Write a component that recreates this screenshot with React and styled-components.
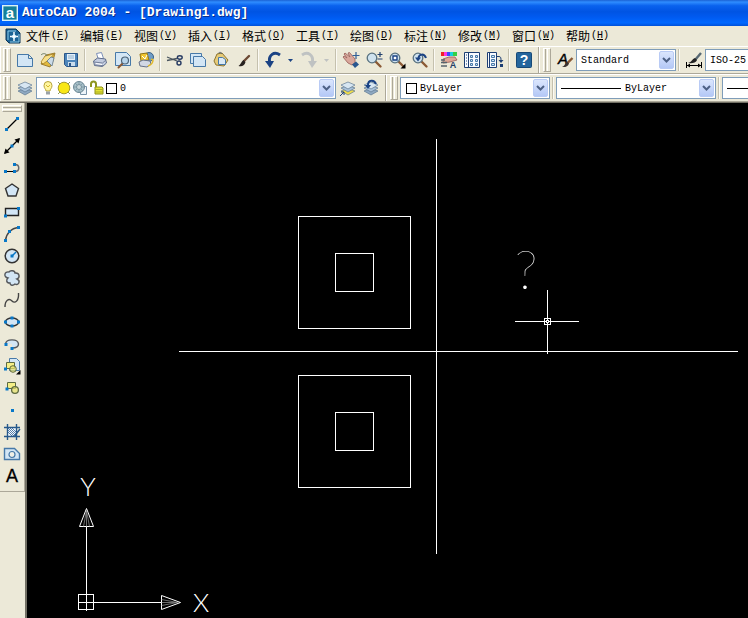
import styled, { createGlobalStyle } from "styled-components";

const GlobalStyle = createGlobalStyle`
    * {
        box-sizing: border-box;
    }
    body {
        margin: 0;
        background-color: #ece9d8;
        overflow: hidden;
    }
    button, select {
        font: inherit;
        color: inherit;
    }
`;

const mono = `"Liberation Mono", "Noto Sans CJK SC", monospace`;

const Window = styled.div`
    display: flex;
    flex-direction: column;
    min-height: 100vh;
    background-color: #ece9d8;
    color: #000;
    font-family: ${mono};
    font-size: 10px;
`;

const TitleBar = styled.header`
    display: flex;
    align-items: center;
    gap: 4px;
    height: 26px;
    padding-left: 2px;
    background: linear-gradient(#1b62d4 0%, #2f8dff 8%, #0a62ee 22%, #0054e3 45%, #005af0 65%, #0068ff 88%, #0050d8 100%);
`;

const Title = styled.h1`
    margin: 0;
    color: #fff;
    font-size: 13px;
    font-weight: bold;
    line-height: 16px;
    white-space: pre;
    text-shadow: 1px 1px 0 #0a2f8c;
`;

const MenuBar = styled.nav`
    display: flex;
    align-items: center;
    height: 20px;
    padding-left: 5px;
    overflow: hidden;
`;

const MenuItem = styled.button`
    display: flex;
    flex: none;
    align-items: center;
    gap: 1px;
    width: 54px;
    padding: 0 0 0 5px;
    border: 0;
    background: none;
    font-size: 10px;
    line-height: 18px;
    white-space: nowrap;
`;

const MenuName = styled.span`
    font-family: "Noto Sans CJK SC", sans-serif;
    font-size: 12px;
`;

const ToolRow = styled.div`
    display: flex;
    height: 28px;
    overflow: hidden;
    border-top: 1px solid #fff;
    border-bottom: 1px solid #aca899;
`;

const Toolbar = styled.div`
    display: flex;
    flex: none;
    align-items: center;
    padding: 0 3px 0 ${props => props.$lead || 3}px;
    border-right: 1px solid #aca899;
    border-left: 1px solid #fff;
`;

const Grip = styled.div`
    flex: none;
    width: ${props => (props.$flat ? "20px" : "8px")};
    height: ${props => (props.$flat ? "7px" : "24px")};
    margin-right: ${props => (props.$flat ? "0" : "2px")};
    border: 1px solid #aca899;
    border-color: #fff #aca899 #aca899 #fff;
    background: linear-gradient(
        ${props => (props.$flat ? "to bottom" : "to right")},
        #ece9d8 1px, #aca899 1px, #aca899 2px, #ece9d8 2px, #ece9d8 3px, #fff 3px, #fff 4px, #ece9d8 4px
    );
`;

const ToolButton = styled.button`
    display: flex;
    flex: none;
    align-items: center;
    justify-content: center;
    width: ${props => (props.$narrow ? 13 : 23)}px;
    height: 22px;
    padding: 0;
    border: 0;
    background: none;
`;

const Separator = styled.span`
    flex: none;
    width: 2px;
    height: 22px;
    margin: 0 2px;
    border-left: 1px solid #c5c1ae;
    border-right: 1px solid #fbfaf4;
`;

const ComboBox = styled.div`
    position: relative;
    display: flex;
    flex: none;
    align-items: center;
    width: ${props => props.$width}px;
    height: 22px;
    padding-left: 3px;
    border: 1px solid #7f9db9;
    background-color: #fff;
`;

const ComboSelect = styled.select`
    flex: 1;
    min-width: 0;
    height: 20px;
    padding: 0 18px 0 1px;
    border: 0;
    outline: 0;
    appearance: none;
    background: none;
`;

const ComboArrow = styled.span`
    position: absolute;
    top: 1px;
    right: 1px;
    display: flex;
    align-items: center;
    justify-content: center;
    width: 15px;
    height: 18px;
    border: 1px solid #b9cbf5;
    border-radius: 2px;
    background: linear-gradient(#dbe6fd, #b4c8f6);
    pointer-events: none;
`;

const Swatch = styled.span`
    flex: none;
    width: 11px;
    height: 11px;
    margin: 0 2px;
    border: 1px solid #000;
    background-color: #fff;
`;

const LineSample = styled.span`
    flex: none;
    width: 60px;
    margin: 0 3px 0 1px;
    border-top: 1px solid #000;
`;

const Workspace = styled.main`
    display: flex;
    flex: 1;
    border-top: 1px solid #716f64;
`;

const SideColumn = styled.aside`
    flex: none;
    width: 27px;
    border-right: 2px solid #716f64;
`;

const DrawToolbar = styled.div`
    display: flex;
    flex-direction: column;
    align-items: center;
    width: 25px;
    padding: 2px 0 4px;
    border-right: 1px solid #aca899;
    border-bottom: 1px solid #aca899;
`;

const DrawButtons = styled.div`
    display: flex;
    flex-direction: column;
    padding-top: 1px;
`;

const Canvas = styled.section`
    display: flex;
    flex: 1;
    min-width: 0;
    background-color: #000;
`;

const Drawing = styled.svg`
    flex: 1;
    min-width: 0;
    min-height: 515px;
    fill: none;
    stroke: #fff;
    stroke-width: 1;
`;

const DrawnText = styled.text`
    fill: #fff;
    stroke: none;
    font-family: Lato, Inter, sans-serif;
    font-weight: ${props => props.$weight};
    font-size: ${props => props.$size}px;
    text-anchor: middle;
`;

const sheet = "#d3e6f5";
const navy = "#1d3f74";
const steel = "#4779a8";
const node = "#0878c8";

const Dot = ({ x, y }) => <rect x={x - 1.5} y={y - 1.5} width="3" height="3" fill={node} />;

const Lens = ({ children }) => (
    <>
        <path d="M9.5 9.5l5 5" stroke="#8b5a35" strokeWidth="2.4" strokeLinecap="round" />
        <circle cx="6" cy="6" r="4.8" fill="#cfe2ee" stroke="#58717f" strokeWidth="1.3" />
        {children}
    </>
);

const Sheets = ({ base }) => (
    <>
        <path d="M1 11l7-2.5 7 2.5-7 4z" fill={base || "#8fa9c2"} stroke="#5e7891" strokeWidth=".7" />
        <path d="M1 8l7-2.5L15 8l-7 4z" fill="#a9c2da" stroke="#5e7891" strokeWidth=".7" />
        <path d="M1 5l7-3 7 3-7 4z" fill="#d7e6f2" stroke="#5e7891" strokeWidth=".7" />
    </>
);

const icons = {
    app: (
        <>
            <rect x=".7" y=".7" width="14.6" height="14.6" fill="#158099" stroke="#d9f1f6" strokeWidth="1.4" />
            <text x="8" y="12.5" fill="#fff" fontFamily="Liberation Sans, sans-serif" fontSize="15" fontWeight="bold" textAnchor="middle">a</text>
        </>
    ),
    document: (
        <>
            <path d="M1 1h10l4 4v10H4l-3-3z" fill="#1b6395" stroke="#0d3557" />
            <path d="M3 3v9M3 3h8M5 14h9V6" stroke="#8ccbe8" fill="none" />
            <path d="M9 4v9M5 8.500h8" stroke="#fff" strokeWidth="1.4" />
            <path d="M9 6l2 2.500-2 2.500-2-2.500z" stroke="#c6ecff" fill="#fff" />
        </>
    ),
    newFile: <path d="M.5 2.500h11l4 4v8H.5z M11.500 2.500v4h4" fill={sheet} stroke={steel} />,
    open: (
        <>
            <path d="M6 3l9-2-2 8-3 6-9-3z" fill="#e0b83e" stroke="#8a6a1c" strokeWidth=".8" />
            <path d="M5 4l9-2-4 5-7 5-2-2z" fill="#f8e08a" stroke="#a47d22" strokeWidth=".8" />
            <path d="M7 9l4-4 3 1-2 8z" fill="#cbdbe7" stroke="#60788b" strokeWidth=".8" />
            <path d="M1 3c2-2 5-2 6 1" stroke="#6c7c64" fill="none" />
        </>
    ),
    save: (
        <>
            <path d="M1.500 1.500h13v13h-11l-2-2z" fill="#4d85ba" stroke="#2a5689" />
            <path d="M4 2h8v6H4z" fill="#e4eff8" />
            <path d="M5 4h6M5 6h6" stroke="#8fb1ce" />
            <path d="M5 10h7v4H5z" fill="#c9dcec" />
            <path d="M6 11h2v3H6z" fill="#2a5689" />
        </>
    ),
    print: (
        <>
            <path d="M4.500 1.500l5-1 2 6-5 1z" fill="#fff" stroke="#7c90b8" />
            <path d="M1.500 9l4-3 8 1 1 4-4 3.500-8-1z" fill="#c4cde0" stroke="#5f6d8c" />
            <path d="M2 10l8.500 1 3.500-3M3 13l8 .5" stroke="#75819c" fill="none" />
            <path d="M4 11.500l6 1" stroke="#fff" />
        </>
    ),
    preview: (
        <>
            <path d="M.5.5h11l4 4v9H.5z" fill={sheet} stroke={steel} />
            <path d="M7.500 11.500l-4 4" stroke="#8b5a35" strokeWidth="2" strokeLinecap="round" />
            <circle cx="10" cy="8.500" r="3.500" fill="#b7d4ea" stroke="#4c6478" strokeWidth="1.2" />
        </>
    ),
    publish: (
        <>
            <ellipse cx="11" cy="5" rx="4.500" ry="4.500" fill="#6f9cc5" stroke="#3a6186" />
            <path d="M2 2l7-1 2 7-8 1z" fill="#f0c62e" stroke="#8f7316" />
            <path d="M4 4l3 3 2-4" stroke="#fff" fill="none" />
            <path d="M1 10l4-2 7 1 1 3-4 3-7-1z" fill="#d2d8e4" stroke="#68738b" />
            <path d="M13 7l2 1c0 3-2 5-5 6" stroke="#e0b82a" fill="none" strokeWidth="1.500" />
        </>
    ),
    cut: (
        <>
            <path d="M0 5l10 4M0 8.500l10-2" stroke="#49545e" strokeWidth="1.3" />
            <ellipse cx="12.800" cy="5.500" rx="2.400" ry="1.700" fill="none" stroke="#263a62" strokeWidth="1.4" />
            <ellipse cx="12" cy="11" rx="2" ry="2" fill="none" stroke="#263a62" strokeWidth="1.4" />
        </>
    ),
    copy: (
        <>
            <path d="M.5 1.500h11v10H.5z" fill={sheet} stroke={steel} />
            <path d="M3.500 4.500h9l3 3v7h-12z" fill={sheet} stroke={steel} />
        </>
    ),
    paste: (
        <>
            <path d="M4 2l5-1 6 7-4 6-8-1-2-4z" fill="#e6cb78" stroke="#8d742f" />
            <path d="M5.500 1c1-1 3-1 3 1" stroke="#5a6470" fill="none" />
            <path d="M5.500 5.500h4l3 2v5h-7z" fill="#dceaf5" stroke={steel} />
        </>
    ),
    brush: (
        <>
            <path d="M13 4L8 9" stroke="#6d4a35" strokeWidth="2.400" strokeLinecap="round" />
            <path d="M7.500 8l2 2c-1 4-4 5-7 4 2-1 3-5 5-6z" fill="#282321" />
        </>
    ),
    undo: (
        <>
            <path d="M15 3C9-1 3.500 3 4.500 10" stroke="#1b4384" strokeWidth="3" fill="none" />
            <path d="M0 9h9l-4 7z" fill="#1b4384" />
        </>
    ),
    redo: (
        <>
            <path d="M1 3c6-4 11.500 0 10.500 7" stroke="#bfc2c2" strokeWidth="3" fill="none" />
            <path d="M16 9H7l4 7z" fill="#bfc2c2" />
        </>
    ),
    pan: (
        <>
            <path d="M0 5l1-1 3 2-3-4 1-1 5 4-2-4 1.500-.5L12 7v4l-3 2-4-2z" fill="#d9a79b" stroke="#9e6760" strokeWidth=".9" />
            <path d="M9 12.500l4-3 3 3-4 3.500z" fill="#29578f" />
            <path d="M13 0v7M9.500 3.500h7" stroke="#315f97" strokeWidth="1.200" />
        </>
    ),
    zoomRealtime: (
        <Lens><path d="M11.500 2.500h5M14 0v5M11.500 7h5" stroke="#23416e" strokeWidth="1.200" /></Lens>
    ),
    zoomWindow: (
        <Lens>
            <path d="M4 4h4v4H4z" fill="#fff" stroke="#1b4384" strokeWidth="1.400" />
            <path d="M16.500 11.500v5h-5z" fill="#000" />
        </Lens>
    ),
    zoomPrevious: (
        <Lens>
            <path d="M14 6C12 1 7 2 6.500 6" stroke="#1b4384" strokeWidth="2" fill="none" />
            <path d="M3 5.500h6L6 9.500z" fill="#1b4384" />
        </Lens>
    ),
    properties: (
        <>
            <path d="M0 0h4v4H0z" fill="#ed2323" />
            <path d="M3 0h3v4H3z" fill="#ff32df" />
            <path d="M6 0h3v4H6z" fill="#3e44ff" />
            <path d="M9 0h3v4H9z" fill="#17d0dd" />
            <path d="M12 0h4v4h-4z" fill="#35d043" />
            <path d="M2 7l6-2 6 0 2 3-7 2-7 1z" fill="#dda797" stroke="#945a55" strokeWidth=".8" />
            <path d="M0 8h4M0 10.500h6M0 14h6" stroke="#55636d" strokeWidth="1.300" />
            <text x="12" y="16" fontFamily="Liberation Sans, sans-serif" fontSize="9" fontWeight="bold" textAnchor="middle" fill="#243e65">A</text>
        </>
    ),
    designCenter: (
        <>
            <path d="M.5.5h15v15H.5z" fill="#f8fbff" stroke={navy} />
            <path d="M4.500 1v14" stroke={navy} />
            <path d="M2 3h1M2 6h1M2 9h1M2 12h1" stroke={navy} />
            <path d="M6.500 3.500h2v2h-2zM11.500 3.500h2v2h-2zM6.500 7.500h2v2h-2zM11.500 7.500h2v2h-2zM6.500 11.500h2v2h-2zM11.500 11.500h2v2h-2z" fill="#d4e4f0" stroke={steel} />
        </>
    ),
    palettes: (
        <>
            <path d="M.5.5h9v15h-9z" fill="#f8fbff" stroke={navy} />
            <path d="M2.500 1v14" stroke={navy} />
            <path d="M4.500 3.500h3v2h-3zM4.500 7.500h3v2h-3zM4.500 11.500h3v2h-3z" fill={sheet} stroke={steel} />
            <path d="M9 4.500h3c2 0 2 2 2 4" stroke={navy} fill="none" />
            <path d="M11.500 8h5L14 11zM13 12h3v3h-3z" fill={navy} />
        </>
    ),
    help: (
        <>
            <rect x=".5" y=".5" width="15" height="15" rx="1" fill="#24659c" stroke="#174977" />
            <text x="8" y="13" fontFamily="Liberation Sans, sans-serif" fontSize="14" fontWeight="bold" textAnchor="middle" fill="#fff">?</text>
        </>
    ),
    textStyle: (
        <>
            <text x="6" y="12" fontFamily="Liberation Sans, sans-serif" fontSize="15" fontStyle="italic" textAnchor="middle" fill="#000" stroke="#000" strokeWidth=".4">A</text>
            <path d="M15.500 6l-5 5" stroke="#8b5a35" strokeWidth="2.400" />
            <path d="M10 9.500l2 2c-1 3-4 4-7 3.500 3-1 3-4 5-5.500z" fill="#3a3330" />
        </>
    ),
    dimStyle: (
        <>
            <path d="M15 1L9 8" stroke="#566772" strokeWidth="2.400" />
            <path d="M9 6l2 2c-1 3-5 3.500-9 3 4-1 4-4 7-5z" fill="#222" />
            <path d="M.5 10v6M15.500 10v6M1 13.500h14" stroke="#000" fill="none" />
            <path d="M1 13.500l3-2v4zM15 13.500l-3-2v4z" fill="#000" />
        </>
    ),
    layers: <Sheets />,
    layerCurrent: (
        <>
            <Sheets base="#f0dd49" />
            <path d="M0 16l4-4M1 12h3v3" stroke={navy} fill="none" />
        </>
    ),
    layerPrevious: (
        <>
            <Sheets />
            <path d="M13 4C11-1 5 0 5 5" stroke="#1b4384" strokeWidth="2" fill="none" />
            <path d="M2 5h6L5 9z" fill="#1b4384" />
        </>
    ),
    bulb: (
        <>
            <path d="M6 11c0-2-2-2.500-2-5.500a4 4 0 018 0c0 3-2 3.500-2 5.500z" fill="#fff6a0" stroke="#b7a33a" />
            <path d="M6 11.500h4v3H6z" fill="#9aa2a8" />
            <path d="M6 5l2 2 2-2" stroke="#d6b92e" fill="none" />
        </>
    ),
    sun: (
        <>
            <path d="M2 2l12 12M14 2L2 14" stroke="#8e9a58" />
            <circle cx="8" cy="8" r="5.800" fill="#f9e716" stroke="#a69b2b" />
        </>
    ),
    freeze: (
        <>
            <path d="M8.500 6.500h6v8h-6z" fill="#eef5fa" stroke="#7893a8" />
            <circle cx="7" cy="7" r="5.500" fill="#a9c2cb" stroke="#6c8794" />
            <path d="M7 1v12M1 7h12M3 3l8 8M11 3l-8 8" stroke="#78939f" strokeWidth=".8" />
            <circle cx="7" cy="7" r="2.500" fill="#c6d5d9" stroke="#78939f" />
        </>
    ),
    lock: (
        <>
            <path d="M3 7V4c0-3.500 5-3.500 5 0v4" stroke="#8d9520" strokeWidth="2" fill="none" />
            <path d="M7 7h7l1 1v6H7z" fill="#e4e437" stroke="#8c8f18" />
            <path d="M7 9.500h8M7 12h8" stroke="#aaac20" />
        </>
    ),
    line: <><path d="M2.500 13.500l11-11" stroke="#000" strokeWidth="1.300" /><Dot x={2.5} y={13.5} /><Dot x={13.5} y={2.5} /></>,
    xline: (
        <>
            <path d="M1 15L15 1" stroke="#000" strokeWidth="1.300" />
            <path d="M0 16l1.500-5.500L5.500 14.500zM16 0l-1.500 5.500L10.500 1.500z" fill="#000" />
            <Dot x={8} y={8} />
        </>
    ),
    polyline: (
        <>
            <path d="M11 11.500c5 0 5-7 0-7" fill="none" stroke="#65666b" strokeWidth="1.500" />
            <path d="M2 11.500h8" stroke="#000" />
            <Dot x={1.5} y={11.5} /><Dot x={10.5} y={11.5} /><Dot x={10.5} y={4.5} />
        </>
    ),
    polygon: <path d="M8 2l6.500 4.500-2.500 7.500H4L1.500 6.500z" fill={sheet} stroke="#333" strokeWidth="1.400" />,
    rectangle: <><path d="M1.500 4.500h13v7h-13z" fill={sheet} stroke="#222" strokeWidth="1.400" /><Dot x={1.5} y={12} /><Dot x={14.5} y={4.5} /></>,
    arc: <><path d="M1.500 14.500C2 8 7 2 14.500 1.500" fill="none" stroke="#444" strokeWidth="1.400" /><Dot x={1.5} y={14.5} /><Dot x={5.5} y={5.5} /><Dot x={14.5} y={1.5} /></>,
    circle: (
        <>
            <circle cx="8" cy="8" r="6.800" fill={sheet} stroke="#333" strokeWidth="1.500" />
            <path d="M8 8l4-4" stroke={node} strokeWidth="1.500" />
            <Dot x={8} y={8} />
        </>
    ),
    cloud: <path d="M4 8C-1 7 .5 1 5 2c1-2 6-1.500 6 1 5-.5 5 5 2 6 4 2 1.500 7-2 5-2 2-5 1.500-5-1-4 0-4-3-2-5z" fill={sheet} stroke="#55585c" strokeWidth="1.400" />,
    spline: <path d="M1 15C1 8 5 6 8 9s7 0 6.500-8" fill="none" stroke="#444" strokeWidth="1.400" />,
    ellipse: (
        <>
            <ellipse cx="8" cy="8" rx="6.500" ry="4" fill={sheet} stroke="#333" strokeWidth="1.400" />
            <Dot x={1.5} y={8} /><Dot x={14.5} y={8} /><Dot x={8} y={4} /><Dot x={8} y={12} />
        </>
    ),
    ellipseArc: (
        <>
            <path d="M1.500 8C2 2.500 14 2.500 14.500 8c0 3-3 4-6.500 4L8 8z" fill={sheet} />
            <path d="M1.500 8C2 2.500 14 2.500 14.500 8c0 3-3 4-6.500 4" fill="none" stroke="#55585c" strokeWidth="1.400" />
            <Dot x={2} y={8.5} /><Dot x={8} y={12.5} />
        </>
    ),
    insertBlock: (
        <>
            <path d="M5.500.5h7l3 3v9h-10z" fill={sheet} stroke={steel} />
            <path d="M2.500 4.500h8v6h-8z" fill="#f5ef86" stroke="#5d6a40" />
            <circle cx="9" cy="11" r="3.300" fill="#e8e36b" fillOpacity=".7" stroke="#5d6a40" />
            <Dot x={1.5} y={11} />
            <path d="M16.500 12v4.500H12z" fill="#000" />
        </>
    ),
    makeBlock: (
        <>
            <path d="M3.500 2.500h8v6h-8z" fill="#f5ef86" stroke="#5d6a40" />
            <circle cx="11" cy="10" r="3.400" fill="#e8e36b" fillOpacity=".7" stroke="#5d6a40" strokeWidth="1.300" />
            <Dot x={3} y={9} />
        </>
    ),
    point: <Dot x={8.5} y={8.5} />,
    hatch: (
        <>
            <path d="M4 4h9v8H4z" fill="#f7fbff" />
            <path d="M4 8l4 4M4 4l8 8M8 4l5 5M6 4l7 7M4 6l6 6" stroke="#2c6096" strokeWidth=".8" />
            <path d="M0 3.500h16M0 12.500h16M3.500 0v16M12.500 0v16M16 5l-6 8" stroke="#27598b" strokeWidth="1.400" fill="none" />
        </>
    ),
    region: (
        <>
            <path d="M.5 2.500h10l5 5v6H.5z" fill={sheet} stroke={steel} strokeWidth="1.400" />
            <circle cx="8" cy="8.500" r="3" fill="#f0efe5" stroke={steel} strokeWidth="1.200" />
        </>
    ),
    text: <text x="8" y="14" fontFamily="Liberation Sans, sans-serif" fontSize="18" textAnchor="middle" fill="#000" stroke="#000" strokeWidth=".3">A</text>,
};

const Icon = ({ name }) => (
    <svg width="16" height="16" viewBox="0 0 16 16" fill="none" overflow="visible" aria-hidden="true">
        {icons[name]}
    </svg>
);

const menus = [
    ["文件", "F"], ["编辑", "E"], ["视图", "V"], ["插入", "I"], ["格式", "O"], ["工具", "T"],
    ["绘图", "D"], ["标注", "N"], ["修改", "M"], ["窗口", "W"], ["帮助", "H"],
];

const standardTools = [
    [["newFile", "新建"], ["open", "打开"], ["save", "保存"]],
    [["print", "打印"], ["preview", "打印预览"], ["publish", "发布"]],
    [["cut", "剪切"], ["copy", "复制"], ["paste", "粘贴"], ["brush", "特性匹配"]],
    [["undo", "放弃", "#1b4384"], ["redo", "重做", "#bfc2c2"]],
    [["pan", "实时平移"], ["zoomRealtime", "实时缩放"], ["zoomWindow", "窗口缩放"], ["zoomPrevious", "缩放上一个"]],
    [["properties", "特性"], ["designCenter", "设计中心"], ["palettes", "工具选项板"]],
    [["help", "帮助"]],
];

const drawTools = [
    ["line", "直线"], ["xline", "构造线"], ["polyline", "多段线"], ["polygon", "正多边形"],
    ["rectangle", "矩形"], ["arc", "圆弧"], ["circle", "圆"], ["cloud", "修订云线"],
    ["spline", "样条曲线"], ["ellipse", "椭圆"], ["ellipseArc", "椭圆弧"], ["insertBlock", "插入块"],
    ["makeBlock", "创建块"], ["point", "点"], ["hatch", "图案填充"], ["region", "面域"], ["text", "多行文字"],
];

const Tool = ({ name, label }) => (
    <ToolButton aria-label={label}>
        <Icon name={name} />
    </ToolButton>
);

const Combo = ({ label, value, width, children }) => (
    <ComboBox $width={width}>
        {children}
        <ComboSelect aria-label={label} defaultValue={value}>
            <option>{value}</option>
        </ComboSelect>
        <ComboArrow>
            <svg width="9" height="6" viewBox="0 0 9 6" fill="none">
                <path d="M1 1l3.500 3.500L8 1" stroke="#4d6185" strokeWidth="2" />
            </svg>
        </ComboArrow>
    </ComboBox>
);

const StandardToolbar = () => (
    <Toolbar $lead={2}>
        <Grip />
        {standardTools.map((group, i) => [
            i > 0 && <Separator key={`s${i}`} />,
            group.map(([name, label, arrow]) => [
                <Tool key={name} name={name} label={label} />,
                arrow && (
                    <ToolButton key={`${name}List`} $narrow aria-label={`${label}列表`}>
                        <svg width="5" height="3" viewBox="0 0 5 3">
                            <path d="M0 0h5L2.500 3z" fill={arrow} />
                        </svg>
                    </ToolButton>
                ),
            ]),
        ])}
    </Toolbar>
);

const Square = ({ x, y, size }) => <rect x={x} y={y} width={size} height={size} />;

const Model = () => (
    <Drawing shapeRendering="crispEdges">
        <g transform="translate(.5 .5)">
            <path d="M409 35v415M151 248h559" />
            <Square x={271} y={113} size={112} />
            <Square x={308} y={150} size={38} />
            <Square x={271} y={272} size={112} />
            <Square x={308} y={309} size={38} />

            {/* cursor */}
            <path d="M487 218h30M523 218h28M520 186v29M520 221v29" />
            <Square x={517} y={215} size={6} />
            <path d="M519 217h2v2h-2zM517 218h2M521 218h2M520 215v2M520 219v2" />

            {/* ucs icon */}
            <Square x={51} y={491} size={15} />
            <path d="M59 507v-84M51 499h83" />
            <g shapeRendering="auto">
                <path d="M52 423h14L59 405zM134 492v14l19-7z" />
                <path d="M56 423l3-16 3 16M59 423v-14M134 496l16 3-16 3M134 499h15" stroke="#999" strokeWidth=".7" />
            </g>
        </g>
        <DrawnText $size={26} $weight={300} x="61" y="393">Y</DrawnText>
        <DrawnText $size={26} $weight={300} x="174" y="509">X</DrawnText>
        <DrawnText $size={54} $weight={100} x="499" y="186">?</DrawnText>
    </Drawing>
);

const App = () => {
    return (
        <Window>
            <GlobalStyle />
            <TitleBar>
                <Icon name="app" />
                <Title>AutoCAD 2004 - [Drawing1.dwg]</Title>
            </TitleBar>
            <MenuBar>
                <Icon name="document" />
                {menus.map(([name, key]) => (
                    <MenuItem key={key}>
                        <MenuName>{name}</MenuName>
                        <span>(<u>{key}</u>)</span>
                    </MenuItem>
                ))}
            </MenuBar>
            <ToolRow>
                <StandardToolbar />
                <Toolbar>
                    <Grip />
                    <Tool name="textStyle" label="文字样式" />
                    <Combo label="文字样式控制" value="Standard" width={100} />
                    <Separator />
                    <Tool name="dimStyle" label="标注样式" />
                    <Combo label="标注样式控制" value="ISO-25" width={100} />
                </Toolbar>
            </ToolRow>
            <ToolRow>
                <Toolbar $lead={2}>
                    <Grip />
                    <Tool name="layers" label="图层特性管理器" />
                    <Combo label="图层控制" value="0" width={300}>
                        <Icon name="bulb" />
                        <Icon name="sun" />
                        <Icon name="freeze" />
                        <Icon name="lock" />
                        <Swatch />
                    </Combo>
                    <Tool name="layerCurrent" label="将对象的图层置为当前" />
                    <Tool name="layerPrevious" label="上一个图层" />
                </Toolbar>
                <Toolbar>
                    <Grip />
                    <Combo label="颜色控制" value="ByLayer" width={150}>
                        <Swatch />
                    </Combo>
                    <Separator />
                    <Combo label="线型控制" value="ByLayer" width={160}>
                        <LineSample />
                    </Combo>
                    <Separator />
                    <Combo label="线宽控制" value="ByLayer" width={160}>
                        <LineSample />
                    </Combo>
                </Toolbar>
            </ToolRow>
            <Workspace>
                <SideColumn>
                    <DrawToolbar>
                        <Grip $flat />
                        <DrawButtons>
                            {drawTools.map(([name, label]) => (
                                <Tool key={name} name={name} label={label} />
                            ))}
                        </DrawButtons>
                    </DrawToolbar>
                </SideColumn>
                <Canvas>
                    <Model />
                </Canvas>
            </Workspace>
        </Window>
    );
};

export default App;
